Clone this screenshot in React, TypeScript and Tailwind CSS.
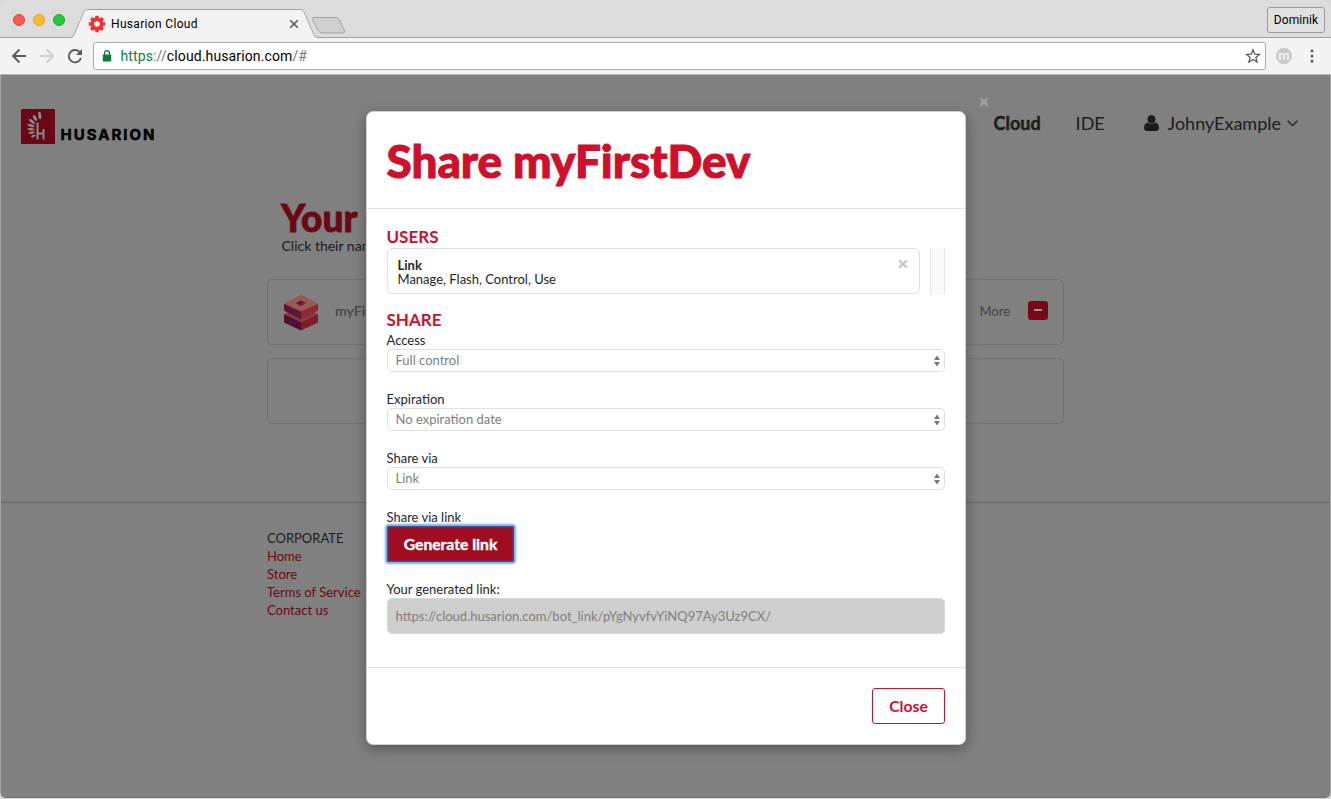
import React from "react";

const lato = "font-['Lato',sans-serif]";

function Updown() {
  return (
    <svg width="6" height="12" viewBox="0 0 6 12" className="shrink-0">
      <path d="M3 0.5 6 5H0ZM3 11.5 6 7H0Z" fill="#777" />
    </svg>
  );
}

function Cross({ color }: { color: string }) {
  return (
    <svg width="10" height="10" viewBox="0 0 10 10">
      <path d="M1.2 1.2 8.8 8.8M8.8 1.2 1.2 8.8" stroke={color} strokeWidth="2.1" />
    </svg>
  );
}

function TabStrip() {
  return (
    <div className="relative flex h-[38px] items-start bg-[#dcdcdc]">
      <svg className="absolute inset-0" width="1331" height="38" viewBox="0 0 1331 38">
        <path d="M0 37.5H70Q73 37.5 74 35L84 12Q85 9.5 88 9.5H300Q303 9.5 304 12L314 35Q315 37.5 318 37.5H1331" fill="none" stroke="#a0a0a0" />
        <path d="M72 38Q74 37 75 34L84.500 12Q85.500 10 88 10H300Q302.500 10 303.500 12L313 34Q314 37 316 38Z" fill="#f3f3f3" />
        <path d="M314 17.500H336Q338 17.500 339 19.500L344.500 31Q345 33 343 33H322Q319.500 33 318.500 31L312.500 19.500Q312 17.500 314 17.500Z" fill="#d0d0d0" stroke="#a3a3a3" />
      </svg>
      <div className="relative flex gap-2 pl-[13px] pt-[14px]">
        <span className="size-3 rounded-full border border-[#e33e41] bg-[#fc5753]" />
        <span className="size-3 rounded-full border border-[#e2a12c] bg-[#fdbc2f]" />
        <span className="size-3 rounded-full border border-[#1aaa29] bg-[#28c83b]" />
      </div>
      <div className="relative ml-[23px] flex h-8 w-[211px] items-center pt-4">
        <svg width="18" height="18" viewBox="-9 -9 18 18" className="shrink-0">
          <circle r="4.700" fill="none" stroke="#ee3430" strokeWidth="3.800" />
          {[0, 45, 90, 135, 180, 225, 270, 315].map((a) => (
            <rect key={a} x="-1.700" y="-8.300" width="3.400" height="3.300" rx=".6" fill="#ee3430" transform={`rotate(${a})`} />
          ))}
        </svg>
        <span className="ml-[5px] flex-1 text-[12px] text-black font-['Roboto',sans-serif] whitespace-nowrap tracking-[.33px]">Husarion Cloud</span>
        <svg width="10" height="10" viewBox="0 0 10 10"><path d="M1.200 1.200 8.800 8.800M8.800 1.200 1.200 8.800" stroke="#5a5a5a" strokeWidth="1.600" /></svg>
      </div>
      <div className="relative ml-auto mr-1.5 mt-[7px] flex h-[26px] w-[58px] items-center justify-center rounded-[3px] border border-[#9b9b9b] bg-[#e1e1e1] text-[12px] tracking-[.1px] text-black font-['Roboto',sans-serif]">Dominik</div>
    </div>
  );
}

function AddressBar() {
  return (
    <div className="flex h-[37px] items-center border-b border-[#b4b4b4] bg-[#f3f3f3]">
      <svg width="92" height="36" viewBox="0 0 92 36" fill="none" strokeWidth="1.900" className="shrink-0">
        <path d="M26 18H13M19.500 11.500 13 18 19.500 24.500" stroke="#5a5a5a" />
        <path d="M40 18H53M46.500 11.500 53 18 46.500 24.500" stroke="#d0d0d0" />
        <path d="M80 14.500A6.200 6.200 0 1 0 80.900 20" stroke="#5a5a5a" />
        <path d="M82 11V17H76Z" fill="#5a5a5a" />
      </svg>
      <div className="ml-px flex h-7 w-[1173px] items-center rounded-[3px] border border-[#a9a9a9] bg-white pl-2 pr-1">
        <svg width="10" height="12" viewBox="0 0 10 12" className="shrink-0">
          <path d="M2.500 5V3.200a2.500 2.500 0 0 1 5 0V5" fill="none" stroke="#0b7a3b" strokeWidth="1.300" />
          <rect x=".8" y="4.500" width="8.400" height="7" rx=".8" fill="#0b7a3b" />
        </svg>
        <span className="ml-[8.500px] text-[14px] leading-5 text-black font-['Roboto',sans-serif] tracking-[.12px]"><span className="text-[#0b8043]">https</span><span className="text-[#777]">://</span>cloud.husarion.com<span className="text-[#777]">/#</span></span>
        <svg width="16" height="16" viewBox="0 0 16 16" className="ml-auto">
          <path d="M8 1.800 9.800 6.200 14.500 6.500 10.900 9.500 12.100 14 8 11.500 3.900 14 5.100 9.500 1.500 6.500 6.200 6.200Z" fill="none" stroke="#5a5a5a" strokeWidth="1.300" />
        </svg>
      </div>
      <span className="ml-[10px] flex size-4 items-center justify-center rounded-full bg-[#c8c8c8] pb-0.5 text-[13px] font-bold leading-none text-[#f3f3f3] font-['Roboto',sans-serif]">m</span>
      <svg width="4" height="14" viewBox="0 0 4 14" className="ml-[18px]" fill="#5a5a5a"><circle cx="2" cy="2" r="1.500" /><circle cx="2" cy="7" r="1.500" /><circle cx="2" cy="12" r="1.500" /></svg>
    </div>
  );
}

function Logo() {
  return (
    <svg width="34" height="35" viewBox="0 0 34 35">
      <rect width="34" height="35" rx=".8" fill="#6b0816" />
      <g stroke="#8b8b8b" fill="none">
        <path d="M16.500 13.500V30.500M22.500 20V30.500M16.500 24.500H22.500" strokeWidth="2" />
      </g>
      <g fill="#8b8b8b">
        <ellipse cx="18.800" cy="6.500" rx="1.500" ry="3.700" transform="rotate(-8 18.800 6.500)" />
        <ellipse cx="14" cy="9" rx="1.500" ry="3.300" transform="rotate(-30 14 9)" />
        <ellipse cx="11" cy="12.500" rx="1.400" ry="3.600" transform="rotate(-52 11 12.500)" />
        <ellipse cx="10" cy="16.500" rx="1.300" ry="3.600" transform="rotate(-72 10 16.500)" />
        <ellipse cx="10" cy="20.200" rx="1.250" ry="3.500" transform="rotate(-88 10 20.200)" />
        <ellipse cx="10.600" cy="23.700" rx="1.200" ry="3.200" transform="rotate(-102 10.600 23.700)" />
        <ellipse cx="12.300" cy="27" rx="1.100" ry="2.400" transform="rotate(-115 12.300 27)" />
      </g>
    </svg>
  );
}

function Device() {
  return (
    <svg width="34" height="37" viewBox="0 0 34 37">
      <path d="M0 20 17 28V36.500L0 28.500Z" fill="#511031" />
      <path d="M34 20 17 28V36.500L34 28.500Z" fill="#84192a" />
      <path d="M0 20 17 12 34 20 17 28Z" fill="#8a3a3a" />
      <path d="M0 9.500 17 17.500V25.500L0 16.500Z" fill="#5b1737" />
      <path d="M34 9.500 17 17.500V25.500L34 16.500Z" fill="#8d2930" />
      <path d="M17 .5 34 9.500 17 17.500 0 9.500Z" fill="#9a5a53" />
      <path d="M17 6.500 22 9 17 12 12 9Z" fill="#541b35" />
      <path d="M17 9.500V12L22 9V7.500Z" fill="#8a2838" />
    </svg>
  );
}

function Page() {
  const links = ["Home", "Store", "Terms of Service", "Contact us"];
  return (
    <div className={`h-[722px] overflow-hidden bg-[#808080] text-[#1b1c1f] ${lato}`}>
      <header className="flex h-[122px] items-start pl-[20px] pr-[32px]">
        <div className="mt-[34px] flex">
          <Logo />
          <svg width="102" height="35" viewBox="0 0 102 35"><text x="5.500" y="30.500" fontSize="15" fontWeight="700" fill="#000" stroke="#000" strokeWidth=".5" fontFamily="Inter, sans-serif" textLength="94" lengthAdjust="spacing">HUSARION</text></svg>
        </div>
        <nav className="ml-auto flex items-center pt-[34px] text-[18px] leading-7">
          <span className="w-[82px] font-bold [-webkit-text-stroke:0.4px_#1b1c1f]">Cloud</span>
          <span className="w-[68px]">IDE</span>
          <svg width="15" height="16" viewBox="0 0 15 16" fill="#1b1c1f"><ellipse cx="7.500" cy="4.300" rx="4" ry="4.300" /><path d="M4 7.500Q7.500 10.500 11 7.500Q15 8 15 13.500Q14.500 16 12 16H3Q.5 16 0 13.500Q0 8 4 7.500Z" /></svg>
          <span className="ml-[9px]">JohnyExample</span>
          <svg width="11" height="7" viewBox="0 0 11 7" className="ml-[6px]"><path d="M.7.8 5.500 5.600 10.300.8" fill="none" stroke="#1b1c1f" strokeWidth="1.300" /></svg>
        </nav>
      </header>
      <main className="ml-[266px] h-[306px] w-[797px]">
        <h1 className="-mt-px pl-[14px] text-[37px] font-black leading-[44px] text-[#6b0816] [-webkit-text-stroke:0.8px_#6b0816]">Your</h1>
        <p className="-mt-[3px] w-[104px] whitespace-nowrap pl-[14.500px] text-[14px] leading-[18px]">Click their nam</p>
        <div className="mt-[24px] flex h-[66px] items-center rounded-[5px] border border-[#707070] pl-4 pr-[15px] text-[14px]">
          <Device />
          <b className="-mt-1 ml-[17px] w-[31px] text-[#4d4d4d]">myFi</b>
          <span className="-mt-px ml-auto text-[13px] text-[#464646]">More</span>
          <span className="-mt-1 ml-[18px] flex h-[19px] w-5 items-center justify-center rounded-[3px] bg-[#780817] pb-px"><span className="h-0.5 w-2 bg-[#969696]" /></span>
        </div>
        <div className="mt-[13px] h-[66px] rounded-[5px] border border-[#707070]" />
      </main>
      <footer className="border-t border-[#666] pl-[266px] pt-[26px] text-[13px] leading-[18px]">
        <p className="text-[13px]">CORPORATE</p>
        {links.map((l) => <p key={l} className="text-[#6b0816]">{l}</p>)}
      </footer>
    </div>
  );
}

function Select({ label, value }: { label: string; value: string }) {
  return (
    <div className="h-[59px]">
      <label className="-ml-[.5px] block h-[18px] text-[13px] leading-[18px]">{label}</label>
      <div className="flex h-[23px] items-center justify-between rounded-[5px] border border-[#e0e0e0] pl-[7.500px] pr-1 text-[13px] text-[#808080]">
        <span>{value}</span>
        <Updown />
      </div>
    </div>
  );
}

function ShareDialog() {
  return (
    <section className={`absolute left-[366px] top-[111px] h-[634px] w-[600px] rounded-[7px] border border-[#cfcfcf] bg-white text-[13px] text-[#24262b] shadow-[0_4px_14px_rgba(0,0,0,0.32)] ${lato}`}>
      <div className="absolute left-[612px] top-[-15px]"><Cross color="#a2a2a2" /></div>
      <header className="flex h-[97px] items-center border-b border-[#e2e2e2] pl-[19.500px]">
        <h2 className="pt-px text-[45.800px] font-black leading-[56px] text-[#ce102d] [-webkit-text-stroke:1px_#ce102d]">Share myFirstDev</h2>
      </header>
      <div className="h-[458px] px-[20px] pt-[18px]">
        <h3 className="-ml-[.5px] h-[21px] text-[17px] font-bold leading-[20px] text-[#ce102d]">USERS</h3>
        <div className="flex h-[46px] justify-between">
          <div className="flex w-[533px] justify-between rounded-[5px] border border-[#e0e0e0] px-[10px] leading-[14px]">
            <div className="-ml-[.5px] pt-[9px]"><b className="block">Link</b><p>Manage, Flash, Control, Use</p></div>
            <div className="pr-px pt-[10px]"><Cross color="#c4c4c4" /></div>
          </div>
          <div className="w-[15px] border-x border-[#e4e4e4] bg-[#f9f9f9]" />
        </div>
        <h3 className="-ml-[.5px] mt-[16px] h-[21px] text-[17px] font-bold leading-[20px] text-[#ce102d]">SHARE</h3>
        <Select label="Access" value="Full control" />
        <Select label="Expiration" value="No expiration date" />
        <Select label="Share via" value="Link" />
        <p className="-ml-[.5px] h-[18px] leading-[18px]">Share via link</p>
        <button className="block h-[36px] w-[127px] rounded-[2px] bg-[#a00c20] pt-0.5 text-[15.700px] font-bold text-white shadow-[inset_0_0_2px_1px_#3565ad,0_0_2px_2px_#6caeff] [-webkit-text-stroke:0.35px_#fff]">Generate link</button>
        <p className="-ml-[.5px] mt-[18px] h-[18px] leading-[18px]">Your generated link:</p>
        <div className="flex h-[36px] items-center rounded-[5px] border border-[#d8d8d8] bg-[#cecece] pl-[7.500px] pt-0.5 text-[13px] text-[#808080]">https://cloud.husarion.com/bot_link/pYgNyvfvYiNQ97Ay3Uz9CX/</div>
      </div>
      <footer className="flex h-[77px] items-center justify-end border-t border-[#e2e2e2] pr-[20px]">
        <button className="h-9 w-[73px] rounded-[3px] border border-[#ce102d] pt-0.5 text-[15.700px] font-bold text-[#ce102d]">Close</button>
      </footer>
    </section>
  );
}

export default function App() {
  return (
    <div className="h-[799px] w-[1331px] overflow-hidden bg-[#d8d8d8]">
      <div className="relative h-[798px] overflow-hidden rounded-[6px]">
        <TabStrip />
        <AddressBar />
        <div className="border-x border-b border-[#a5a5a5] border-b-[#707070]"><Page /></div>
        <ShareDialog />
      </div>
    </div>
  );
}
